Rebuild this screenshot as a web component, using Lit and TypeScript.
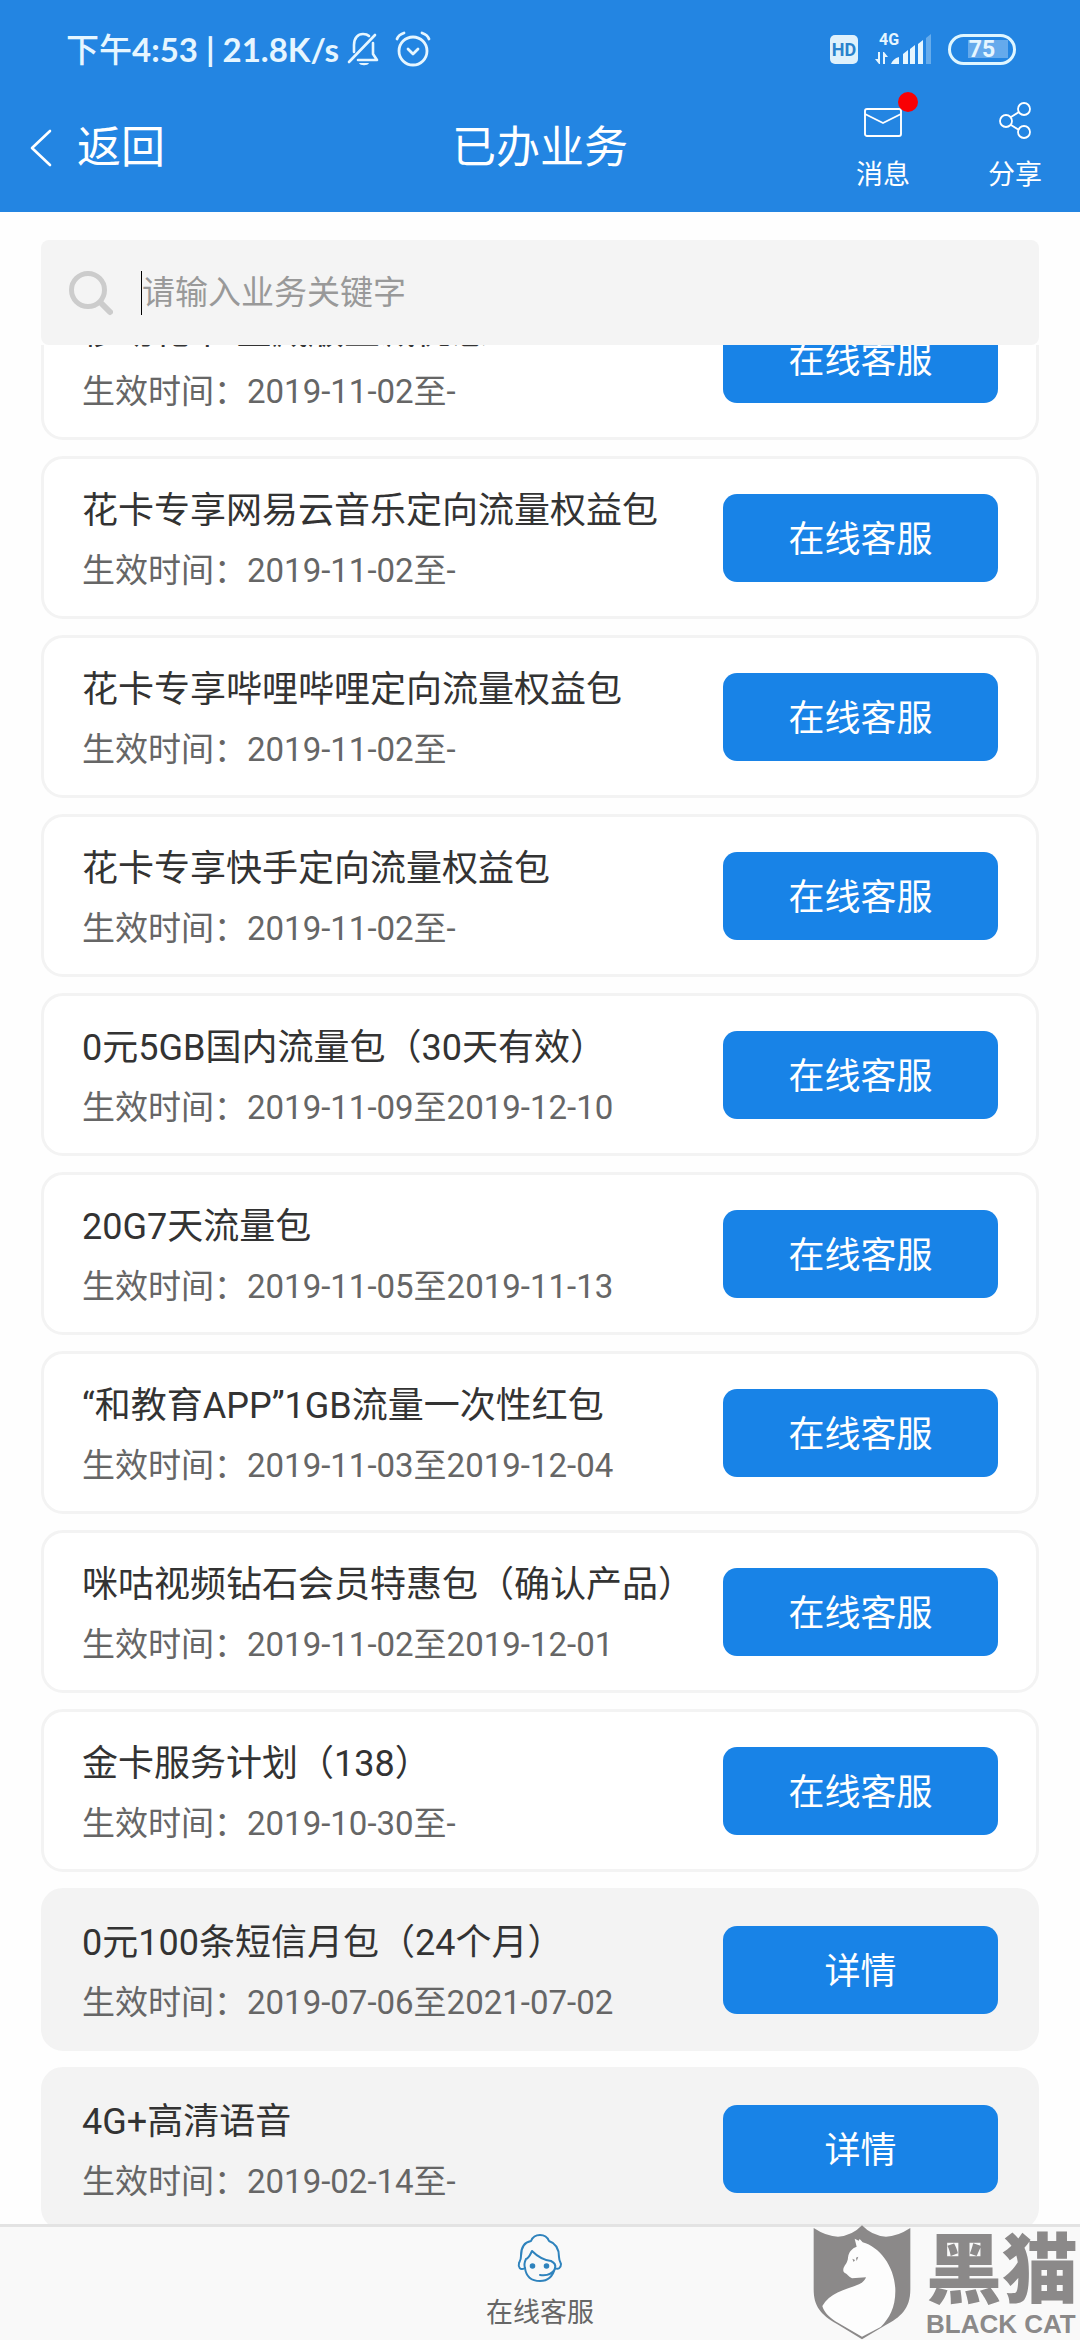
import { LitElement, html, css } from "lit";
import { customElement, property, query } from "lit/decorators.js";
import { classMap } from "lit/directives/class-map.js";

interface Service {
  name: string;
  period: string;
  detail?: boolean;
}

const SERVICES: Service[] = [
  { name: "移动花卡-宝藏版立减优惠", period: "2019-11-02至-" },
  { name: "花卡专享网易云音乐定向流量权益包", period: "2019-11-02至-" },
  { name: "花卡专享哔哩哔哩定向流量权益包", period: "2019-11-02至-" },
  { name: "花卡专享快手定向流量权益包", period: "2019-11-02至-" },
  { name: "0元5GB国内流量包（30天有效）", period: "2019-11-09至2019-12-10" },
  { name: "20G7天流量包", period: "2019-11-05至2019-11-13" },
  { name: "“和教育APP”1GB流量一次性红包", period: "2019-11-03至2019-12-04" },
  { name: "咪咕视频钻石会员特惠包（确认产品）", period: "2019-11-02至2019-12-01" },
  { name: "金卡服务计划（138）", period: "2019-10-30至-" },
  { name: "0元100条短信月包（24个月）", period: "2019-07-06至2021-07-02", detail: true },
  { name: "4G+高清语音", period: "2019-02-14至-", detail: true },
];

@customElement("status-bar")
class StatusBar extends LitElement {
  static styles = css`
    :host {
      display: flex;
      justify-content: space-between;
      align-items: center;
      height: 50px;
      padding: 24px 64px 0 66px;
      color: #e6f6ff;
    }
    .group {
      display: flex;
      align-items: center;
    }
    .clock {
      font: 700 33px/50px Lato, "Noto Sans CJK SC", sans-serif;
      white-space: nowrap;
    }
    .half {
      font-weight: 500;
    }
    svg {
      display: block;
      flex: none;
    }
    .bell {
      margin: 0 16px 0 8px;
    }
    .hd {
      width: 28px;
      height: 29px;
      margin-right: 17px;
      border-radius: 5px;
      background: #dff1fc;
      color: #2a82cc;
      font: 700 18px/30px Roboto, sans-serif;
      text-align: center;
    }
    .signal {
      margin-right: 16px;
    }
    .battery {
      box-sizing: border-box;
      width: 68px;
      height: 31px;
      border: 3px solid #dff6ff;
      border-radius: 16px;
      background: linear-gradient(#65aaec, #65aaec) 17px 3px / 40px 18px no-repeat;
      font: 700 23px/25px Roboto, sans-serif;
      text-align: center;
    }
  `;

  render() {
    return html`
      <div class="group">
        <span class="clock"><span class="half">下午</span>4:53 | 21.8K/s</span>
        <svg class="bell" width="32" height="34" viewBox="0 0 32 34" fill="none" stroke="currentColor" stroke-width="2.6" stroke-linecap="round" stroke-linejoin="round">
          <path d="M2 30 28 3M7 20V13C7 6 11 2 16 2c3 0 5 1 6 2M26 11v11l4 6H11" />
          <path d="M12 31h10c-1 3-9 3-10 0z" fill="currentColor" stroke="none" />
        </svg>
        <svg width="36" height="36" viewBox="0 0 36 36" fill="none" stroke="currentColor" stroke-width="2.8" stroke-linecap="round" stroke-linejoin="round">
          <circle cx="18" cy="20" r="14" />
          <path d="M2 8C3 5 6 3 9 2M27 2c3 1 6 3 7 6M13 18l5 5 5-5" />
        </svg>
      </div>
      <div class="group">
        <span class="hd">HD</span>
        <svg class="signal" width="57" height="34" viewBox="0 0 57 34" fill="currentColor">
          <text x="4" y="13" font-family="Roboto, sans-serif" font-weight="700" font-size="16">4G</text>
          <path d="M3 20h2v12H4l-4-5h3zM8 32V20h1l4 5h-3v7z" />
          <path d="M16 32c1-3 4-6 8-7v7zM28 22l5-4v14h-5zM35 17l5-4v19h-5zM43 12l5-4v24h-5z" />
          <path d="M51 6l5-4v30h-5z" opacity=".35" />
        </svg>
        <span class="battery">75</span>
      </div>
    `;
  }
}

@customElement("nav-header")
class NavHeader extends LitElement {
  static styles = css`
    :host {
      display: grid;
      grid-template-columns: 1fr auto 1fr;
      align-items: center;
      box-sizing: border-box;
      height: 138px;
      padding-top: 10px;
      color: #fff;
    }
    button {
      border: 0;
      padding: 0;
      background: none;
      color: inherit;
      font: inherit;
      cursor: pointer;
    }
    svg {
      display: block;
    }
    .back {
      display: flex;
      align-items: center;
      gap: 25px;
      padding-left: 30px;
      font-size: 44px;
      line-height: 60px;
    }
    .title {
      margin: 0;
      font-size: 44px;
      font-weight: 400;
      line-height: 60px;
    }
    .actions {
      display: flex;
      justify-content: flex-end;
      gap: 78px;
      padding-right: 38px;
    }
    .action {
      display: flex;
      flex-direction: column;
      align-items: center;
      gap: 16px;
      font-size: 27px;
      line-height: 40px;
    }
    .icon {
      position: relative;
    }
    .dot {
      position: absolute;
      top: -9px;
      right: -16px;
      width: 20px;
      height: 20px;
      border-radius: 50%;
      background: #f90004;
    }
  `;

  render() {
    return html`
      <button class="back">
        <svg width="22" height="38" viewBox="0 0 22 38" fill="none" stroke="currentColor" stroke-width="2.6" stroke-linecap="round" stroke-linejoin="round">
          <path d="M20 2 2 19l18 17" />
        </svg>
        返回
      </button>
      <h1 class="title">已办业务</h1>
      <div class="actions">
        <button class="action">
          <span class="icon">
            <svg width="38" height="38" viewBox="0 0 38 38" fill="none" stroke="currentColor" stroke-width="1.9" stroke-linejoin="round">
              <rect x="1" y="8" width="36" height="27" rx="2" />
              <path d="m1 13 18 9 18-9" />
            </svg>
            <span class="dot"></span>
          </span>
          消息
        </button>
        <button class="action">
          <svg width="32" height="38" viewBox="0 0 32 38" fill="none" stroke="currentColor" stroke-width="1.8">
            <circle cx="7" cy="20" r="6" />
            <circle cx="25" cy="8" r="6" />
            <circle cx="25" cy="31" r="6" />
            <path d="m12 16 8-5M12 24l8 5" />
          </svg>
          分享
        </button>
      </div>
    `;
  }
}

@customElement("service-card")
class ServiceCard extends LitElement {
  @property({ attribute: false }) service!: Service;

  static styles = css`
    :host {
      display: block;
    }
    .card {
      display: flex;
      align-items: center;
      justify-content: space-between;
      box-sizing: border-box;
      min-height: 163px;
      padding: 0 38px;
      border: 3px solid #f3f3f3;
      border-radius: 22px;
      background: #fff;
    }
    .muted {
      background: #f3f3f3;
    }
    .text {
      padding-top: 6px;
    }
    .name,
    .period {
      margin: 0;
      font-weight: 400;
      line-height: 60px;
      white-space: nowrap;
    }
    .name {
      color: #333;
      font-size: 36px;
    }
    .period {
      color: #666;
      font-size: 33px;
    }
    .act {
      flex: none;
      width: 275px;
      height: 88px;
      padding: 0 0 3px;
      border: 0;
      border-radius: 14px;
      background: #1883e7;
      color: #fff;
      font: inherit;
      font-size: 36px;
      cursor: pointer;
    }
  `;

  render() {
    const { name, period, detail = false } = this.service;
    return html`
      <article class=${classMap({ card: true, muted: detail })}>
        <div class="text">
          <h2 class="name">${name}</h2>
          <p class="period">生效时间：${period}</p>
        </div>
        <button class="act">${detail ? "详情" : "在线客服"}</button>
      </article>
    `;
  }
}

@customElement("cat-mark")
class CatMark extends LitElement {
  static styles = css`
    :host {
      display: flex;
      gap: 15px;
      color: #8b8989;
    }
    svg {
      display: block;
    }
    .words {
      display: flex;
      flex-direction: column;
      gap: 6px;
    }
    .zh {
      font: 900 76px/78px "Noto Sans CJK SC", sans-serif;
    }
    .en {
      font: 700 26px/30px "Liberation Sans", sans-serif;
    }
  `;

  render() {
    return html`
      <svg width="98" height="115" viewBox="33 27 294 345">
        <path fill="currentColor" d="M35 36Q75 62 108 62Q150 60 180 28Q210 60 252 62Q285 62 325 36V220C325 280 295 304 250 328L180 370 105 324C55 296 35 270 35 220Z" />
        <path fill="#fdfdfd" d="m158 68 12 6 3-5 9 10c52 14 98 76 98 146 0 50-18 82-44 108l-56 29-80-46c-20-14-34-28-39-46 24-44 88-54 110-65 13-6 19-14 21-21l-42 3c-10-4-14-13-21-16-6-3-6-10-4-16 4-9 12-16 13-30 2-18 12-28 26-33z" />
        <path fill="currentColor" d="m151 128 8 4-4 6zM162 125l7-3-5 13z" />
      </svg>
      <div class="words">
        <span class="zh">黑猫</span>
        <span class="en">BLACK CAT</span>
      </div>
    `;
  }
}

@customElement("app-root")
class AppRoot extends LitElement {
  @query(".list") list!: HTMLElement;

  static styles = css`
    :host {
      display: flex;
      flex-direction: column;
      height: 100vh;
      background: #fefefe;
      font-family: Roboto, "Noto Sans CJK SC", sans-serif;
    }
    .top {
      background: #2385e2;
    }
    .search {
      display: flex;
      align-items: center;
      height: 105px;
      margin: 28px 41px 0;
      padding: 0 28px;
      border-radius: 8px;
      background: #f4f4f4;
    }
    .glass {
      flex: none;
      margin-right: 28px;
    }
    .caret {
      width: 1px;
      height: 44px;
      background: #000;
    }
    .field {
      flex: 1;
      min-width: 0;
      padding: 0;
      border: 0;
      outline: 0;
      background: none;
      color: #333;
      font: inherit;
      font-size: 33px;
      line-height: 44px;
    }
    .field::placeholder {
      color: #999;
      opacity: 1;
    }
    .list {
      flex: 1;
      min-height: 0;
      display: flex;
      flex-direction: column;
      gap: 16px;
      margin: 0;
      padding: 0 41px;
      overflow-y: auto;
      scrollbar-width: none;
      list-style: none;
    }
    .item {
      flex: none;
    }
    .tabs {
      position: relative;
      display: flex;
      justify-content: center;
      box-sizing: border-box;
      height: 116px;
      padding-top: 6px;
      border-top: 3px solid #e3e3e3;
      background: #f9f9f9;
    }
    .tab {
      display: flex;
      flex-direction: column;
      align-items: center;
      gap: 10px;
      color: #666;
      font-size: 27px;
      line-height: 40px;
      text-decoration: none;
    }
    .mark {
      position: absolute;
      right: 2px;
      bottom: 0;
    }
  `;

  async firstUpdated() {
    const cards = [...this.renderRoot.querySelectorAll<ServiceCard>("service-card")];
    await Promise.all(cards.map((card) => card.updateComplete));
    this.list.scrollTop = 68;
  }

  render() {
    return html`
      <header class="top">
        <status-bar></status-bar>
        <nav-header></nav-header>
      </header>
      <label class="search">
        <svg class="glass" width="44" height="46" viewBox="0 0 44 46" fill="none" stroke="#ccc" stroke-linecap="round">
          <circle cx="19" cy="20" r="16.5" stroke-width="5" />
          <path d="m33 34 8 8" stroke-width="6" />
        </svg>
        <span class="caret"></span>
        <input class="field" type="text" placeholder="请输入业务关键字" aria-label="请输入业务关键字" />
      </label>
      <ul class="list">
        ${SERVICES.map(
          (service) => html`<li class="item"><service-card .service=${service}></service-card></li>`
        )}
      </ul>
      <footer class="tabs">
        <a class="tab" href="#service">
          <svg width="46" height="50" viewBox="0 0 46 50" fill="none" stroke="#2f83bd" stroke-width="2" stroke-linecap="round" stroke-linejoin="round">
            <path d="M8 35C3 38 1 34 2 30C3 28 4 27 4 23C4 14 8 9 14 8C16 3 19 2 23 2C27 2 30 3 32 8C38 10 42 15 42 24C42 27 43 29 44 31C44 35 41 37 38 35" />
            <path d="M8 35C7 32 8 28 9 26C12 25 13 22 15 18C21 24 26 27 34 28C38 30 39 32 38 35C36 43 31 48 23 48C14 48 9 43 8 35ZM23 42C30 43 35 41 38 36" />
            <circle cx="15.5" cy="33" r="1.8" fill="#2f83bd" />
            <circle cx="29.5" cy="33" r="1.8" fill="#2f83bd" />
          </svg>
          在线客服
        </a>
        <cat-mark class="mark"></cat-mark>
      </footer>
    `;
  }
}
